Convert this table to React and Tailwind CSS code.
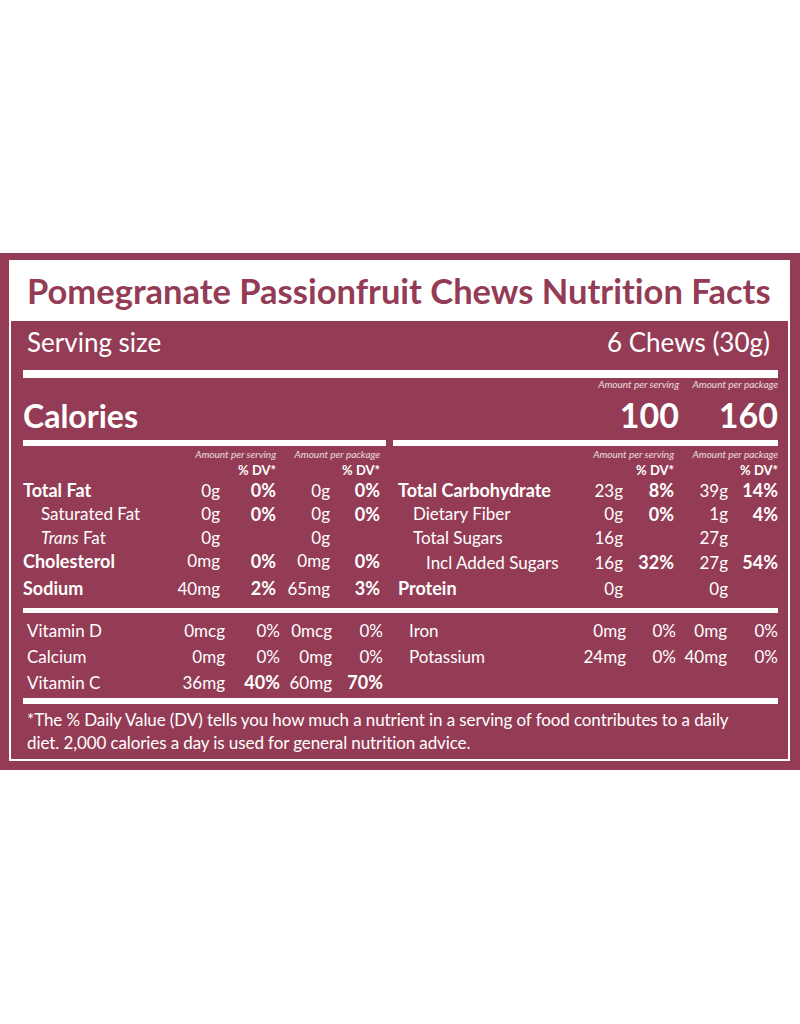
const leftGrid = "grid-cols-[1fr_55px_56px_54px_50px] pr-[6px]";
const rightGrid = "grid-cols-[1fr_55px_51px_54px_50px] pl-[5px]";
const vitLeftGrid = "grid-cols-[1fr_55px_55px_52px_51px] pl-[4px] pr-[3px]";
const vitRightGrid = "grid-cols-[1fr_55px_50px_51px_51px] pl-[16px]";

const fats = [
  { label: "Total Fat", bold: true, a: "0g", b: "0%", c: "0g", d: "0%", h: "h-[24px]" },
  { label: "Saturated Fat", indent: "pl-[18px]", a: "0g", b: "0%", c: "0g", d: "0%", h: "h-[23px]" },
  {
    label: (
      <>
        <i>Trans</i> Fat
      </>
    ),
    indent: "pl-[18px]",
    a: "0g",
    c: "0g",
    h: "h-[24px]",
  },
  { label: "Cholesterol", bold: true, a: "0mg", b: "0%", c: "0mg", d: "0%", h: "h-[23px]" },
  { label: "Sodium", bold: true, a: "40mg", b: "2%", c: "65mg", d: "3%", h: "h-[24px] mt-[4px]" },
];

const carbs = [
  { label: "Total Carbohydrate", bold: true, a: "23g", b: "8%", c: "39g", d: "14%", h: "h-[24px]" },
  { label: "Dietary Fiber", indent: "pl-[15px]", a: "0g", b: "0%", c: "1g", d: "4%", h: "h-[23px]" },
  { label: "Total Sugars", indent: "pl-[15px]", a: "16g", c: "27g", h: "h-[24px]" },
  { label: "Incl Added Sugars", indent: "pl-[28px]", a: "16g", b: "32%", c: "27g", d: "54%", h: "h-[23px] pt-[3px]" },
  { label: "Protein", bold: true, a: "0g", c: "0g", h: "h-[24px] mt-[4px]" },
];

const vitLeft = [
  { label: "Vitamin D", a: "0mcg", b: "0%", c: "0mcg", d: "0%" },
  { label: "Calcium", a: "0mg", b: "0%", c: "0mg", d: "0%" },
  { label: "Vitamin C", a: "36mg", b: "40%", c: "60mg", d: "70%", dvBold: true },
];

const vitRight = [
  { label: "Iron", a: "0mg", b: "0%", c: "0mg", d: "0%" },
  { label: "Potassium", a: "24mg", b: "0%", c: "40mg", d: "0%" },
];

function Row({ grid, label, bold, indent = "", a, b, c, d, dvBold, h = "h-[26px]" }) {
  const dv = dvBold ? "font-bold text-[18px]" : "font-normal";
  return (
    <div className={`grid ${grid} ${h} items-center text-[17px] leading-none`}>
      <div className={`${indent} ${bold ? "font-bold text-[18px]" : "font-normal"} whitespace-nowrap`}>{label}</div>
      <div className="text-right">{a}</div>
      <div className={`text-right ${dv}`}>{b}</div>
      <div className="text-right">{c}</div>
      <div className={`text-right ${dv}`}>{d}</div>
    </div>
  );
}

function ColumnHead({ grid }) {
  return (
    <>
      <div className={`grid ${grid} h-[12px] mt-[2px] items-center text-[10px] italic text-white/80 leading-none`}>
        <div />
        <div className="col-span-2 text-right whitespace-nowrap">Amount per serving</div>
        <div className="col-span-2 text-right whitespace-nowrap">Amount per package</div>
      </div>
      <div className={`grid ${grid} h-[16px] mt-[2px] items-center text-[13px] font-bold leading-none`}>
        <div />
        <div />
        <div className="text-right">% DV*</div>
        <div />
        <div className="text-right">% DV*</div>
      </div>
    </>
  );
}

export default function App() {
  return (
    <div className="min-h-[1024px] bg-white pt-[253px] font-[Lato,sans-serif] text-white">
      <div className="bg-[#943c55] pl-[9px] pr-[10px] pt-[7px] pb-[9px]">
        <div className="border-2 border-white">
          <div className="flex h-[59px] items-center bg-white pl-[16px]">
            <h1 className="text-[34.5px] font-bold leading-none text-[#943c55] whitespace-nowrap [font-variant-ligatures:none]">
              Pomegranate Passionfruit Chews Nutrition Facts
            </h1>
          </div>

          <div className="pl-[12px] pr-[10px]">
            <div className="flex h-[49px] items-center justify-between pb-[7px] pl-[4px] pr-[8px] text-[26px] font-normal leading-none">
              <span>Serving size</span>
              <span>6 Chews (30g)</span>
            </div>
            <div className="h-[8px] bg-white" />

            <div className="flex h-[62px] items-end justify-between pb-[8px]">
              <div className="text-[32px] font-bold leading-none">Calories</div>
              <div className="flex gap-x-[14px]">
                <div className="flex flex-col items-end">
                  <span className="text-[10px] italic leading-[12px] text-white/80">Amount per serving</span>
                  <span className="mt-[8px] text-[34px] font-bold leading-none">100</span>
                </div>
                <div className="flex w-[85px] flex-col items-end">
                  <span className="text-[10px] italic leading-[12px] text-white/80 whitespace-nowrap">
                    Amount per package
                  </span>
                  <span className="mt-[8px] text-[34px] font-bold leading-none">160</span>
                </div>
              </div>
            </div>

            <div className="grid grid-cols-[363px_385px] gap-x-[7px] pb-[8px]">
              <div>
                <div className="h-[6px] bg-white" />
                <ColumnHead grid={leftGrid} />
                {fats.map((r, i) => (
                  <Row key={i} grid={leftGrid} dvBold {...r} />
                ))}
              </div>
              <div>
                <div className="h-[6px] bg-white" />
                <ColumnHead grid={rightGrid} />
                {carbs.map((r, i) => (
                  <Row key={i} grid={rightGrid} dvBold {...r} />
                ))}
              </div>
            </div>

            <div className="h-[5px] bg-white" />

            <div className="grid grid-cols-[363px_385px] gap-x-[7px] pt-[4px] pb-[3px]">
              <div>
                {vitLeft.map((r, i) => (
                  <Row key={i} grid={vitLeftGrid} {...r} />
                ))}
              </div>
              <div>
                {vitRight.map((r, i) => (
                  <Row key={i} grid={vitRightGrid} {...r} />
                ))}
              </div>
            </div>

            <div className="h-[6px] bg-white" />

            <p className="pl-[4px] pt-[4px] pb-[5px] text-[17px] tracking-[-0.1px] leading-[23px]">
              *The % Daily Value (DV) tells you how much a nutrient in a serving of food contributes to a daily
              <br />
              diet. 2,000 calories a day is used for general nutrition advice.
            </p>
          </div>
        </div>
      </div>
    </div>
  );
}
